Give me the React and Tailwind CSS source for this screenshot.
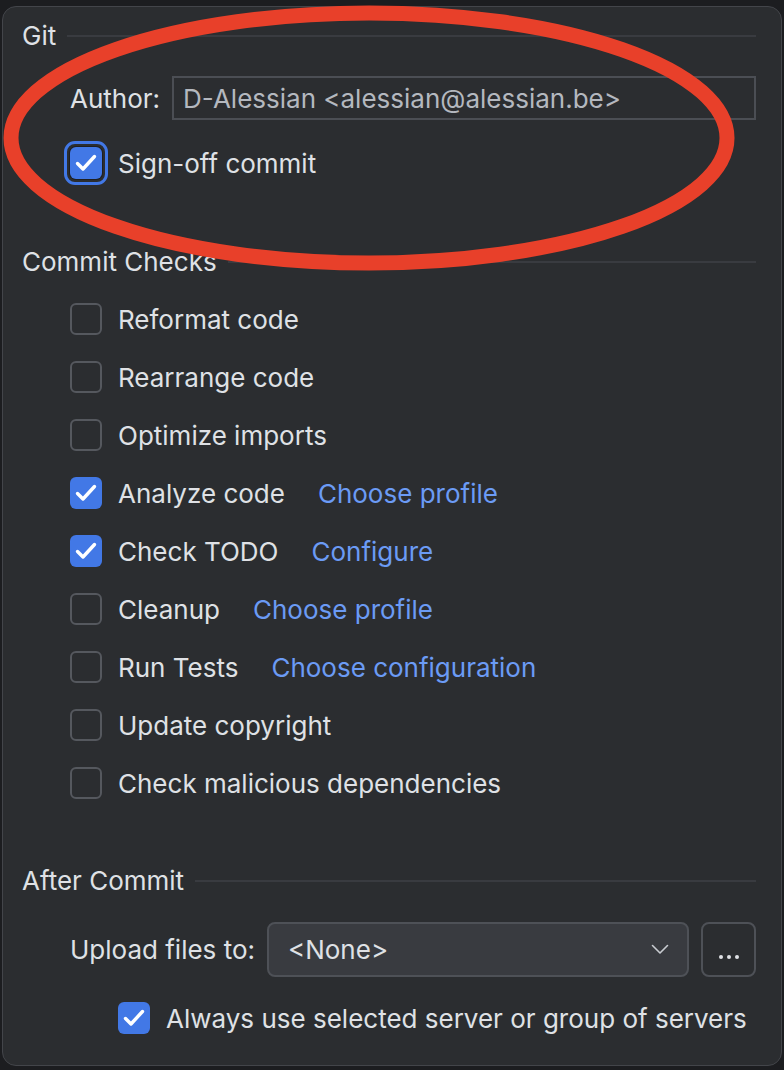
import React from 'react';

const checks = [
  { label: 'Reformat code' },
  { label: 'Rearrange code' },
  { label: 'Optimize imports' },
  { label: 'Analyze code', checked: true, link: 'Choose profile' },
  { label: 'Check TODO', checked: true, link: 'Configure' },
  { label: 'Cleanup', link: 'Choose profile' },
  { label: 'Run Tests', link: 'Choose configuration' },
  { label: 'Update copyright' },
  { label: 'Check malicious dependencies' },
];

function Tick() {
  return (
    <svg width="32" height="32" viewBox="0 0 32 32" fill="none">
      <path d="M7.5 16.5 L13 22 L24.5 9.5" stroke="#ffffff" strokeWidth="3.4" strokeLinecap="round" strokeLinejoin="round" />
    </svg>
  );
}

function Box({ checked }) {
  if (checked) {
    return (
      <div className="w-[32px] h-[32px] shrink-0 rounded-[6px] bg-[#4278e6] flex items-center justify-center">
        <Tick />
      </div>
    );
  }
  return <div className="w-[32px] h-[32px] shrink-0 rounded-[6px] border-2 border-[#55585e]" />;
}

function SectionHeader({ title }) {
  return (
    <div className="h-[30px] flex items-center gap-[11px]">
      <span className="leading-none">{title}</span>
      <div className="flex-1 h-[2px] bg-[#393b40]" />
    </div>
  );
}

export default function App() {
  return (
    <div
      className="relative w-[784px] h-[1070px] bg-[#1c1d20] pt-[6px] pl-[2px] overflow-hidden text-[26px] text-[#dfe1e5]"
      style={{ fontFamily: 'Inter, "Noto Sans", sans-serif' }}
    >
      <div className="w-[780px] h-[1060px] rounded-[14px] border border-[#43454a] bg-[#2b2d30] pt-[14px] pl-[19px] pr-[25px]">
        <SectionHeader title="Git" />

        <div className="mt-[25px] ml-[48px] h-[44px] flex items-center gap-[12px]">
          <span>Author:</span>
          <div className="flex-1 h-[44px] border-2 border-[#4b4e54] flex items-center pl-[9px] text-[#b4b8bf]">
            D-Alessian &lt;alessian@alessian.be&gt;
          </div>
        </div>

        <div className="mt-[21px] ml-[42px] h-[44px] flex items-center gap-[10px]">
          <div className="w-[44px] h-[44px] rounded-[11px] border-[3px] border-[#4278e6] flex items-center justify-center">
            <div className="w-[32px] h-[32px] rounded-[6px] bg-[#4278e6] ring-1 ring-[#1e1f22] flex items-center justify-center">
              <Tick />
            </div>
          </div>
          <span>Sign-off commit</span>
        </div>

        <div className="mt-[62px]">
          <SectionHeader title="Commit Checks" />
        </div>

        <div className="mt-[13px] ml-[48px] flex flex-col">
          {checks.map((c) => (
            <div key={c.label} className="h-[58px] flex items-center">
              <Box checked={c.checked} />
              <span className="ml-[16px]">{c.label}</span>
              {c.link && <span className="ml-[33px] text-[#6b9bf5]">{c.link}</span>}
            </div>
          ))}
        </div>

        <div className="mt-[54px]">
          <SectionHeader title="After Commit" />
        </div>

        <div className="mt-[26px] ml-[48px] h-[55px] flex items-center gap-[12px]">
          <span>Upload files to:</span>
          <div className="flex-1 h-[55px] rounded-[8px] border-2 border-[#4e5157] bg-[#393b40] flex items-center justify-between pl-[19px] pr-[18px]">
            <span>&lt;None&gt;</span>
            <svg width="18" height="11" viewBox="0 0 18 11" fill="none">
              <path d="M1.5 1.5 L9 9 L16.5 1.5" stroke="#c9ccd1" strokeWidth="1.6" strokeLinecap="round" strokeLinejoin="round" />
            </svg>
          </div>
          <div className="w-[55px] h-[55px] rounded-[8px] border-2 border-[#4e5157] flex items-end justify-center pb-[16px] gap-[4px]">
            <span className="w-[4px] h-[4px] rounded-full bg-[#dfe1e5]" />
            <span className="w-[4px] h-[4px] rounded-full bg-[#dfe1e5]" />
            <span className="w-[4px] h-[4px] rounded-full bg-[#dfe1e5]" />
          </div>
        </div>

        <div className="mt-[25px] ml-[96px] h-[32px] flex items-center gap-[16px]">
          <Box checked />
          <span>Always use selected server or group of servers</span>
        </div>
      </div>

      <svg className="absolute left-0 top-0 pointer-events-none" width="784" height="1070">
        <ellipse cx="369" cy="138" rx="358" ry="125" fill="none" stroke="#e8402a" strokeWidth="15" />
      </svg>
    </div>
  );
}
